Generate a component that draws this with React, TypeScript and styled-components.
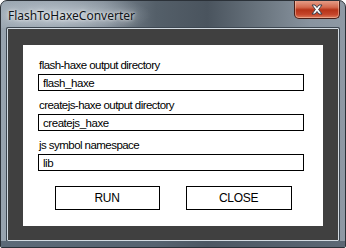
import React, { useState } from 'react';
import styled, { createGlobalStyle } from 'styled-components';

const GlobalStyle = createGlobalStyle`
    html, body {
        margin: 0;
        padding: 0;
        background: #ffffff;
    }
`;

const Window = styled.div`
    width: 346px;
    height: 248px;
    box-sizing: border-box;
    border: 1px solid #2b3138;
    border-radius: 7px 7px 2px 2px;
    background: linear-gradient(90deg, #97a3ae 0%, #8f9aa5 14%, #7d8893 30%, #545f69 45%, #4a545e 60%, #6f7a84 78%, #8994a0 90%, #8e99a4 100%);
    display: flex;
    flex-direction: column;
    overflow: hidden;
    position: relative;
`;

const TitleBar = styled.div`
    height: 27px;
    display: flex;
    align-items: flex-start;
    justify-content: space-between;
    padding-left: 7px;
    background: radial-gradient(ellipse 90px 22px at 60px 14px, rgba(200, 210, 218, 0.75) 0%, rgba(200, 210, 218, 0) 100%);
`;

const Title = styled.span`
    font-family: "Noto Sans", "Open Sans", sans-serif;
    font-size: 12px;
    line-height: 14px;
    margin-top: 8px;
    color: #101418;
    text-shadow: 0 0 6px rgba(255, 255, 255, 0.9), 0 0 3px rgba(255, 255, 255, 0.8);
`;

const CloseButton = styled.div`
    width: 46px;
    height: 19px;
    margin-top: -1px;
    margin-right: 5px;
    box-sizing: border-box;
    border: 1px solid #4a1e16;
    border-top: none;
    border-radius: 0 0 5px 5px;
    background: linear-gradient(180deg, #e8a48f 0%, #d46a4f 40%, #b63318 55%, #c5452a 80%, #de7b5c 100%);
    box-shadow: inset 0 0 0 1px rgba(255, 220, 200, 0.45);
    display: flex;
    align-items: center;
    justify-content: center;
`;

const ClientFrame = styled.div`
    flex: 1;
    margin: 0 6px 6px 6px;
    border: 1px solid #d3dbe2;
    border-radius: 1px;
    background: #404040;
    box-shadow: 0 0 0 1px #3d4751;
    padding: 16px 15px 14px 15px;
    display: flex;
`;

const Panel = styled.div`
    flex: 1;
    background: #ffffff;
    padding: 12px 19px 0 15px;
    display: flex;
    flex-direction: column;
`;

const Field = styled.div`
    display: flex;
    flex-direction: column;
    gap: 1px;
    margin-bottom: 6px;
`;

const uiFont = `"Liberation Sans", Arial, sans-serif`;

const Label = styled.label`
    font-family: ${uiFont};
    font-size: 11.5px;
    letter-spacing: -0.55px;
    line-height: 16px;
    height: 16px;
    color: #000000;
    padding-left: 1px;
`;

const TextInput = styled.input`
    box-sizing: border-box;
    width: 266px;
    height: 17px;
    border: 1px solid #000000;
    padding: 0 4px;
    margin: 0;
    font-family: ${uiFont};
    font-size: 11.5px;
    letter-spacing: -0.45px;
    color: #000000;
    background: #ffffff;
    outline: none;
`;

const ButtonRow = styled.div`
    display: flex;
    justify-content: center;
    gap: 26px;
    margin-top: 9px;
    padding-left: 4px;
`;

const PanelButton = styled.button<{ $w: number }>`
    box-sizing: border-box;
    width: ${p => p.$w}px;
    height: 24px;
    border: 1px solid #000000;
    background: #ffffff;
    font-family: ${uiFont};
    font-size: 12px;
    letter-spacing: -0.3px;
    color: #000000;
    padding: 0;
    margin: 0;
`;

const BottomStrip = styled.div`
    position: absolute;
    left: 0;
    right: 0;
    bottom: 0;
    height: 6px;
    background: linear-gradient(90deg, #5d6a78 0%, #566370 45%, #4c5763 60%, #5c6875 100%);
    pointer-events: none;
`;

const App: React.FC = (): JSX.Element => {
    const [flashDir, setFlashDir] = useState('flash_haxe');
    const [createjsDir, setCreatejsDir] = useState('createjs_haxe');
    const [namespace, setNamespace] = useState('lib');

    return (
        <>
            <GlobalStyle />
            <Window>
                <BottomStrip />
                <TitleBar>
                    <Title>FlashToHaxeConverter</Title>
                    <CloseButton>
                        <svg width="14" height="11" viewBox="0 0 14 11">
                            <path d="M2 1 L5 1 L7 3.5 L9 1 L12 1 L8.6 5.5 L12 10 L9 10 L7 7.5 L5 10 L2 10 L5.4 5.5 Z"
                                fill="#ffffff" stroke="#3a3f4a" strokeWidth="1" strokeLinejoin="round" />
                        </svg>
                    </CloseButton>
                </TitleBar>
                <ClientFrame>
                    <Panel>
                        <Field>
                            <Label>flash-haxe output directory</Label>
                            <TextInput value={flashDir} onChange={e => setFlashDir(e.target.value)} />
                        </Field>
                        <Field>
                            <Label>createjs-haxe output directory</Label>
                            <TextInput value={createjsDir} onChange={e => setCreatejsDir(e.target.value)} />
                        </Field>
                        <Field>
                            <Label>js symbol namespace</Label>
                            <TextInput value={namespace} onChange={e => setNamespace(e.target.value)} />
                        </Field>
                        <ButtonRow>
                            <PanelButton $w={105}>RUN</PanelButton>
                            <PanelButton $w={106}>CLOSE</PanelButton>
                        </ButtonRow>
                    </Panel>
                </ClientFrame>
            </Window>
        </>
    );
}

export default App;
